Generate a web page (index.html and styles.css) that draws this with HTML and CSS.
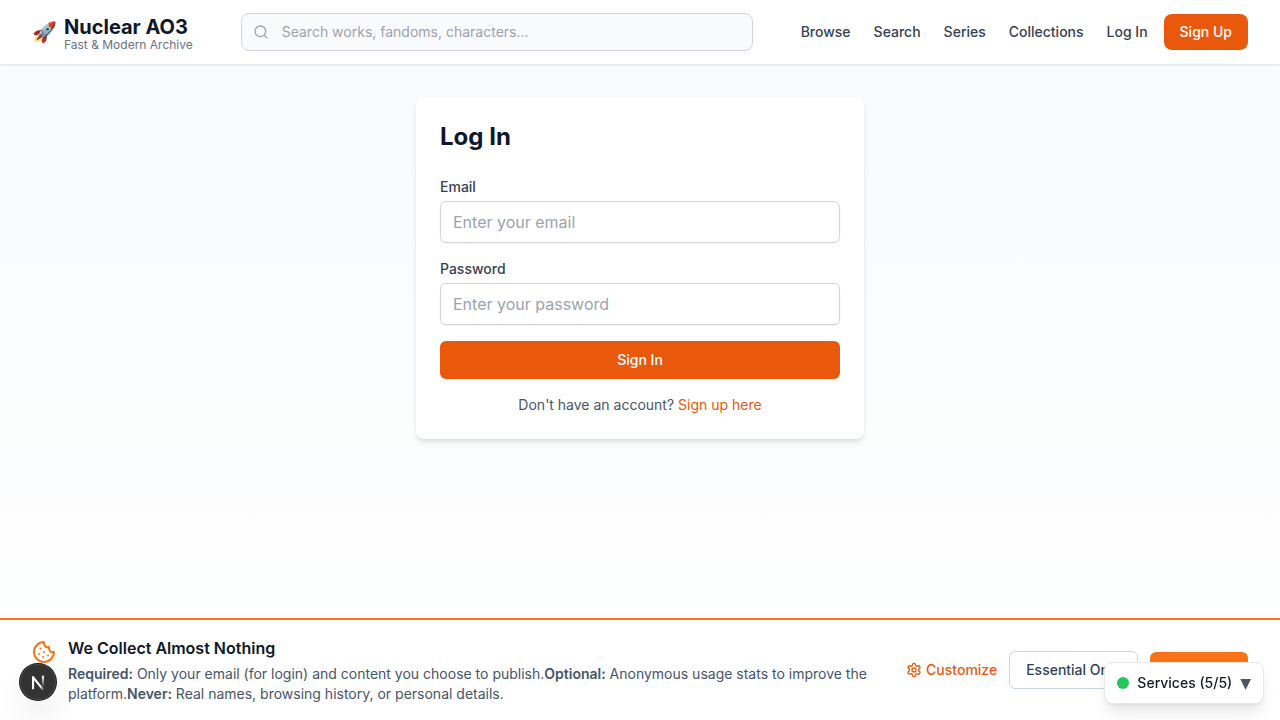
FILE: index.html
```html
<!DOCTYPE html>
<html lang="en">
<head>
<meta charset="utf-8">
<meta name="viewport" content="width=device-width, initial-scale=1">
<title>Log In - Nuclear AO3</title>
<link rel="stylesheet" href="styles.css">
</head>
<body>
<header class="site-header">
  <a class="brand" href="#">
    <span class="brand-icon" aria-hidden="true">🚀</span>
    <span class="brand-text">
      <span class="brand-name">Nuclear AO3</span>
      <span class="brand-tagline">Fast &amp; Modern Archive</span>
    </span>
  </a>
  <form class="search" role="search">
    <svg class="search-icon" viewBox="0 0 24 24" aria-hidden="true"><circle cx="11" cy="11" r="8"/><path d="m21 21-4.300-4.300"/></svg>
    <input class="search-input" type="search" aria-label="Search" placeholder="Search works, fandoms, characters...">
  </form>
  <nav class="nav">
    <a class="nav-link" href="#">Browse</a>
    <a class="nav-link" href="#">Search</a>
    <a class="nav-link" href="#">Series</a>
    <a class="nav-link" href="#">Collections</a>
    <div class="account">
      <a class="nav-link" href="#">Log In</a>
      <a class="signup" href="#">Sign Up</a>
    </div>
  </nav>
</header>

<main class="main">
  <form class="card">
    <h1 class="card-title">Log In</h1>
    <div class="field">
      <label class="label" for="email">Email</label>
      <input class="input" id="email" type="email" placeholder="Enter your email">
    </div>
    <div class="field">
      <label class="label" for="password">Password</label>
      <input class="input" id="password" type="password" placeholder="Enter your password">
    </div>
    <button class="submit" type="submit">Sign In</button>
    <p class="card-note">Don't have an account? <a class="card-link" href="#">Sign up here</a></p>
  </form>
</main>

<section class="consent" aria-label="Privacy">
  <div class="consent-info">
    <svg class="cookie" viewBox="0 0 24 24" aria-hidden="true"><path d="M12 2a10 10 0 1 0 10 10 4 4 0 0 1-5-5 4 4 0 0 1-5-5"/><path d="M8.500 8.500v.01"/><path d="M16 15.500v.01"/><path d="M12 12v.01"/><path d="M11 17v.01"/><path d="M7 14v.01"/></svg>
    <div class="consent-copy">
      <h2 class="consent-title">We Collect Almost Nothing</h2>
      <p class="consent-text"><strong>Required:</strong> Only your email (for login) and content you choose to publish.<strong>Optional:</strong> Anonymous usage stats to improve the platform.<strong>Never:</strong> Real names, browsing history, or personal details.</p>
    </div>
  </div>
  <div class="consent-actions">
    <button class="customize" type="button">
      <svg class="gear" viewBox="0 0 24 24" aria-hidden="true"><path d="M12.220 2h-.44a2 2 0 0 0-2 2v.18a2 2 0 0 1-1 1.730l-.43.25a2 2 0 0 1-2 0l-.15-.08a2 2 0 0 0-2.730.73l-.22.38a2 2 0 0 0 .73 2.730l.15.1a2 2 0 0 1 1 1.720v.51a2 2 0 0 1-1 1.740l-.15.09a2 2 0 0 0-.73 2.730l.22.38a2 2 0 0 0 2.730.73l.15-.08a2 2 0 0 1 2 0l.43.25a2 2 0 0 1 1 1.730V20a2 2 0 0 0 2 2h.44a2 2 0 0 0 2-2v-.18a2 2 0 0 1 1-1.730l.43-.25a2 2 0 0 1 2 0l.15.08a2 2 0 0 0 2.730-.73l.22-.39a2 2 0 0 0-.73-2.730l-.15-.08a2 2 0 0 1-1-1.740v-.5a2 2 0 0 1 1-1.740l.15-.09a2 2 0 0 0 .73-2.730l-.22-.38a2 2 0 0 0-2.730-.73l-.15.08a2 2 0 0 1-2 0l-.43-.25a2 2 0 0 1-1-1.730V4a2 2 0 0 0-2-2z"/><circle cx="12" cy="12" r="3"/></svg>
      Customize
    </button>
    <button class="essential" type="button">Essential Only</button>
    <button class="accept" type="button">Accept All</button>
  </div>
</section>

<button class="dev-badge" type="button" aria-label="Developer tools">
  <svg class="dev-mark" viewBox="0 0 40 40" aria-hidden="true">
    <defs>
      <linearGradient id="diag" gradientUnits="userSpaceOnUse" x1="20" y1="20" x2="27" y2="29"><stop offset="0.500" stop-color="#fff"/><stop offset="1" stop-color="#fff" stop-opacity="0"/></linearGradient>
      <linearGradient id="stem" gradientUnits="userSpaceOnUse" x1="26" y1="13" x2="26" y2="26"><stop offset="0" stop-color="#fff"/><stop offset="1" stop-color="#fff" stop-opacity="0"/></linearGradient>
    </defs>
    <path d="M14.500 27V14.500L26 29" fill="none" stroke="url(#diag)" stroke-width="2.400"/>
    <path d="M25.500 14V25" fill="none" stroke="url(#stem)" stroke-width="2.400"/>
  </svg>
</button>

<button class="services" type="button">
  <span class="status-dot"></span>
  <span>Services (5/5)</span>
  <span class="caret" aria-hidden="true">▼</span>
</button>
</body>
</html>
```

FILE: styles.css
```css
*, *::before, *::after { box-sizing: border-box; }

body {
  margin: 0;
  min-height: 100vh;
  font-family: Inter, "Liberation Sans", sans-serif;
  font-size: 14px;
  line-height: 20px;
  color: #111827;
  background: linear-gradient(to bottom, #f8fafc, #ffffff);
}

a { color: inherit; text-decoration: none; }
button, input { font: inherit; margin: 0; }
button { cursor: pointer; }
h1, h2, p { margin: 0; }
svg {
  flex-shrink: 0;
  fill: none;
  stroke: currentColor;
  stroke-width: 2;
  stroke-linecap: round;
  stroke-linejoin: round;
}

.site-header {
  display: flex;
  align-items: center;
  justify-content: space-between;
  min-height: 65px;
  padding: 0 32px;
  background: #fff;
  border-bottom: 1px solid #e5e7eb;
  box-shadow: 0 1px 2px rgba(0, 0, 0, 0.05);
}

.brand { display: flex; align-items: center; gap: 8px; }
.brand-icon { width: 24px; font-size: 20px; line-height: 28px; }
.brand-text { display: flex; flex-direction: column; padding-top: 2px; }
.brand-name { font-size: 20px; line-height: 28px; font-weight: 700; color: #0f172a; }
.brand-tagline { margin-top: -4px; font-size: 12px; line-height: 16px; color: #6b7280; }

.search { position: relative; flex: 0 1 512px; }
.search-icon { position: absolute; left: 12px; top: 11px; width: 16px; height: 16px; color: #9ca3af; }
.search-input {
  display: block;
  width: 100%;
  padding: 8px 16px 8px 40px;
  border: 1px solid #d1d5db;
  border-radius: 8px;
  background: #f9fafb;
  appearance: none;
}
input::placeholder { color: #9ca3af; opacity: 1; }

.nav { display: flex; align-items: center; gap: 23px; font-weight: 500; color: #374151; }
.account { display: flex; align-items: center; gap: 16px; }
.signup { padding: 8px 16px; border-radius: 8px; background: #ea580c; color: #fff; }

.main { padding: 32px 16px; }
.card {
  max-width: 448px;
  margin: 0 auto;
  padding: 24px;
  border-radius: 8px;
  background: #fff;
  box-shadow: 0 4px 6px -1px rgba(0, 0, 0, 0.1), 0 2px 4px -2px rgba(0, 0, 0, 0.1);
}
.card-title { margin-bottom: 24px; font-size: 24px; line-height: 32px; font-weight: 700; color: #0f172a; }
.field { margin-bottom: 16px; }
.label { display: block; margin-bottom: 4px; font-weight: 500; color: #374151; }
.input {
  display: block;
  width: 100%;
  height: 42px;
  padding: 8px 12px;
  border: 1px solid #d1d5db;
  border-radius: 6px;
  background: #fff;
  font-size: 16px;
  line-height: 24px;
  box-shadow: 0 1px 2px rgba(0, 0, 0, 0.05);
}
.submit {
  display: block;
  width: 100%;
  padding: 8px 16px;
  border: 1px solid transparent;
  border-radius: 6px;
  background: #ea580c;
  color: #fff;
  font-weight: 500;
}
.card-note { margin-top: 16px; text-align: center; color: #4b5563; }
.card-link { color: #ea580c; }

.consent {
  position: fixed;
  left: 0;
  right: 0;
  bottom: 0;
  display: flex;
  align-items: center;
  justify-content: space-between;
  gap: 16px;
  padding: 16px 32px;
  border-top: 2px solid #f97316;
  background: #fff;
}
.consent-info { display: flex; align-items: flex-start; gap: 12px; flex: 1; }
.cookie { width: 24px; height: 24px; margin-top: 4px; color: #f97316; }
.consent-copy { flex: 1; }
.consent-title { margin-bottom: 4px; font-size: 16px; line-height: 24px; font-weight: 600; color: #0f172a; }
.consent-text { color: #475569; }
.consent-text strong { font-weight: 600; }
.consent-actions { display: flex; align-items: center; gap: 12px; font-weight: 500; white-space: nowrap; }
.customize {
  display: flex;
  align-items: center;
  gap: 4px;
  padding: 0;
  border: 0;
  background: none;
  color: #ea580c;
}
.gear { width: 16px; height: 16px; }
.essential { padding: 8px 16px; border: 1px solid #cbd5e1; border-radius: 6px; background: #fff; color: #334155; }
.accept { padding: 8px 15px; border: 0; border-radius: 6px; background: #f97316; color: #fff; }

.dev-badge {
  position: fixed;
  left: 20px;
  bottom: 20px;
  width: 36px;
  height: 36px;
  padding: 0;
  border: 0;
  border-radius: 50%;
  background: #333;
  box-shadow: 0 0 0 1px #171717, inset 0 0 0 1px #4a4a4a, 0 16px 32px -8px rgba(0, 0, 0, 0.24);
}
.dev-mark { display: block; width: 36px; height: 36px; }

.services {
  position: fixed;
  right: 16px;
  bottom: 16px;
  display: flex;
  align-items: center;
  gap: 8px;
  padding: 10px 12px;
  border: 1px solid #e5e7eb;
  border-radius: 8px;
  background: #fff;
  color: #111827;
  font-weight: 500;
  box-shadow: 0 10px 15px -3px rgba(0, 0, 0, 0.1), 0 4px 6px -4px rgba(0, 0, 0, 0.1);
}
.status-dot { width: 12px; height: 12px; border-radius: 50%; background: #22c55e; }
.caret { font-family: "DejaVu Sans", sans-serif; color: #4b5563; }
```
